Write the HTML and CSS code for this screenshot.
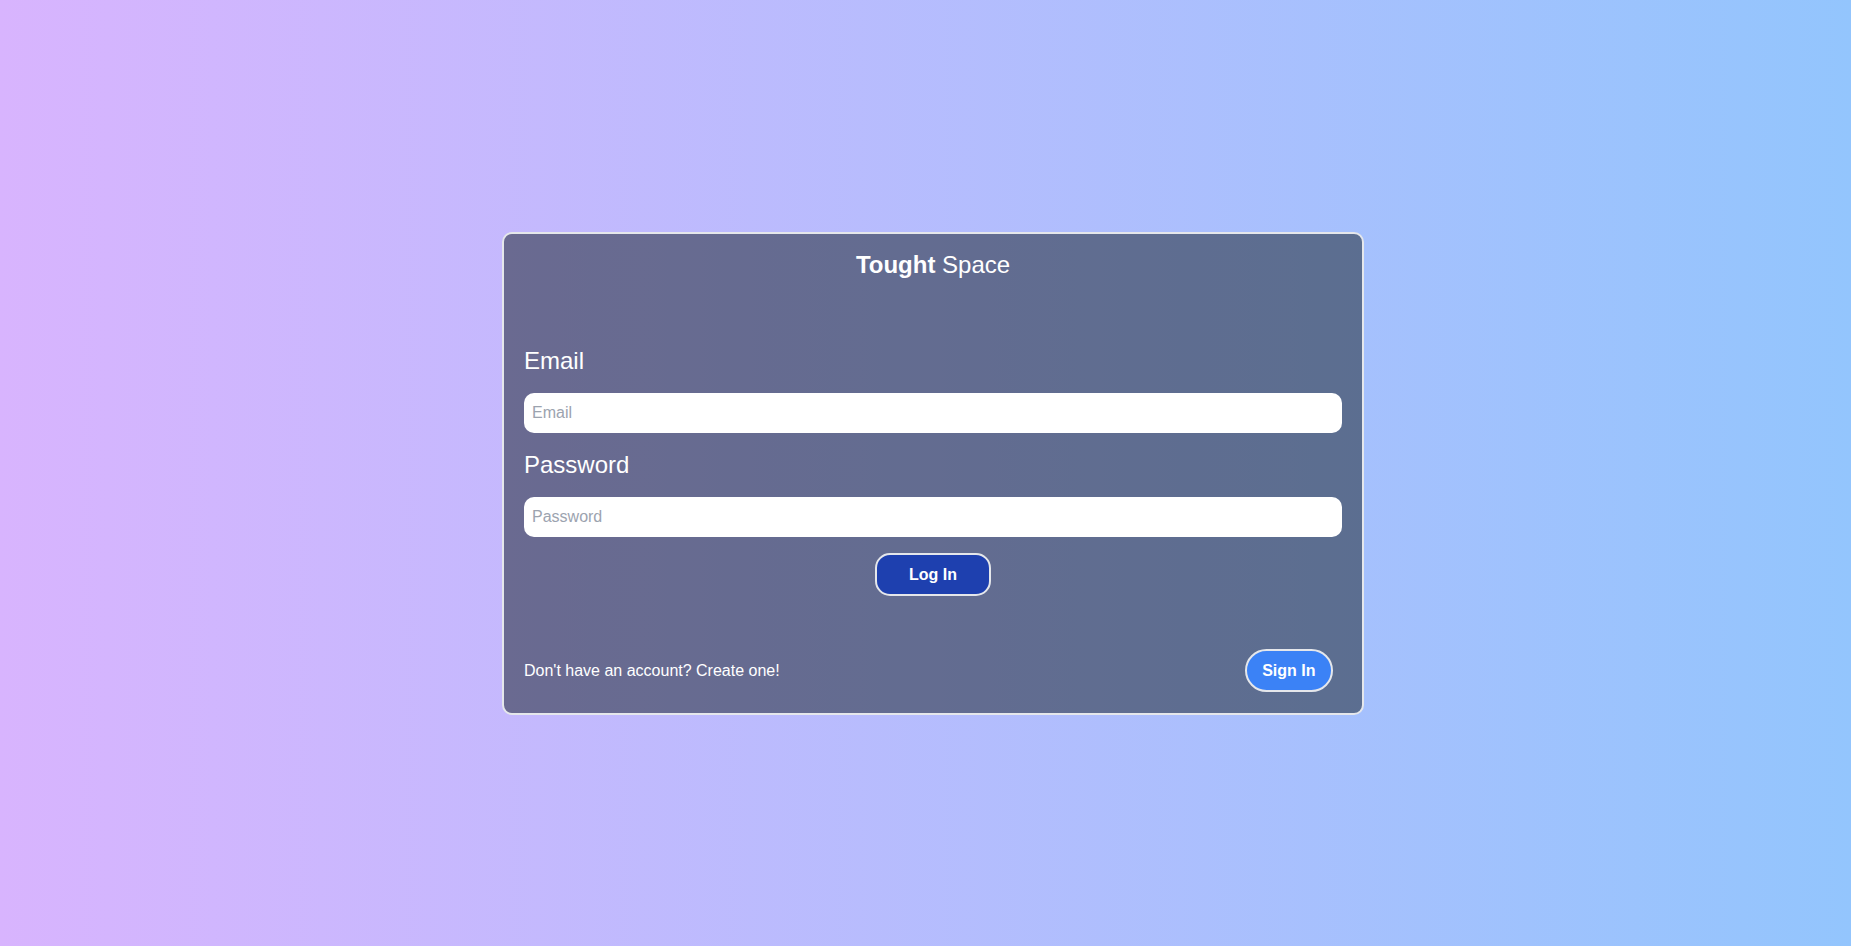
FILE: index.html
```html
<!DOCTYPE html>
<html lang="en">
<head>
<meta charset="utf-8">
<title>Tought Space</title>
<link rel="stylesheet" href="styles.css">
</head>
<body>
<main class="page">
  <section class="card">
    <h1 class="title"><strong>Tought</strong> Space</h1>
    <form class="form">
      <label class="label" for="email">Email</label>
      <input class="input" id="email" type="email" placeholder="Email">
      <label class="label" for="password">Password</label>
      <input class="input" id="password" type="password" placeholder="Password">
      <div class="actions">
        <button class="btn btn-login" type="button">Log In</button>
      </div>
    </form>
    <div class="footer">
      <span class="footer-text">Don't have an account? Create one!</span>
      <button class="btn btn-signin" type="button">Sign In</button>
    </div>
  </section>
</main>
</body>
</html>
```

FILE: styles.css
```css
* { box-sizing: border-box; }

html, body {
  margin: 0;
  padding: 0;
}

body {
  font-family: "Liberation Sans", Arial, sans-serif;
  color: #ffffff;
  background: linear-gradient(to right, #d8b4fe, #93c5fd);
  min-height: 100vh;
}

.page {
  min-height: 100vh;
  display: flex;
  align-items: center;
  justify-content: center;
}

.card {
  width: 862px;
  margin-left: 15px;
  border: 2px solid #e5e7eb;
  border-radius: 10px;
  background: rgba(31, 41, 55, 0.55);
  padding: 17px 20px 21px;
}

.title {
  margin: 0 0 68px;
  font-size: 24px;
  line-height: 28px;
  font-weight: normal;
  text-align: center;
}

.title strong { font-weight: bold; }

.form {
  display: flex;
  flex-direction: column;
}

.label {
  display: block;
  font-size: 24px;
  line-height: 28px;
  margin-bottom: 18px;
}

.input {
  display: block;
  width: 100%;
  height: 40px;
  border: none;
  border-radius: 10px;
  background: #ffffff;
  padding: 0 8px;
  font-family: "Liberation Sans", Arial, sans-serif;
  font-size: 16px;
  color: #111827;
  outline: none;
  margin-bottom: 18px;
}

.input:last-of-type { margin-bottom: 16px; }

.input::placeholder { color: #9ca3af; }

.actions {
  display: flex;
  justify-content: center;
}

.btn {
  font-family: "Liberation Sans", Arial, sans-serif;
  font-size: 16px;
  font-weight: bold;
  line-height: 19px;
  color: #ffffff;
  border: 2px solid #e5e7eb;
  cursor: pointer;
}

.btn-login {
  background: #1e40af;
  border-radius: 15px;
  padding: 10px 32px;
}

.footer {
  margin-top: 53px;
  display: flex;
  align-items: center;
  justify-content: space-between;
}

.footer-text {
  font-size: 16px;
  line-height: 19px;
}

.btn-signin {
  background: #3b82f6;
  border-radius: 22px;
  padding: 10px 15.5px;
  margin-right: 9px;
}
```
